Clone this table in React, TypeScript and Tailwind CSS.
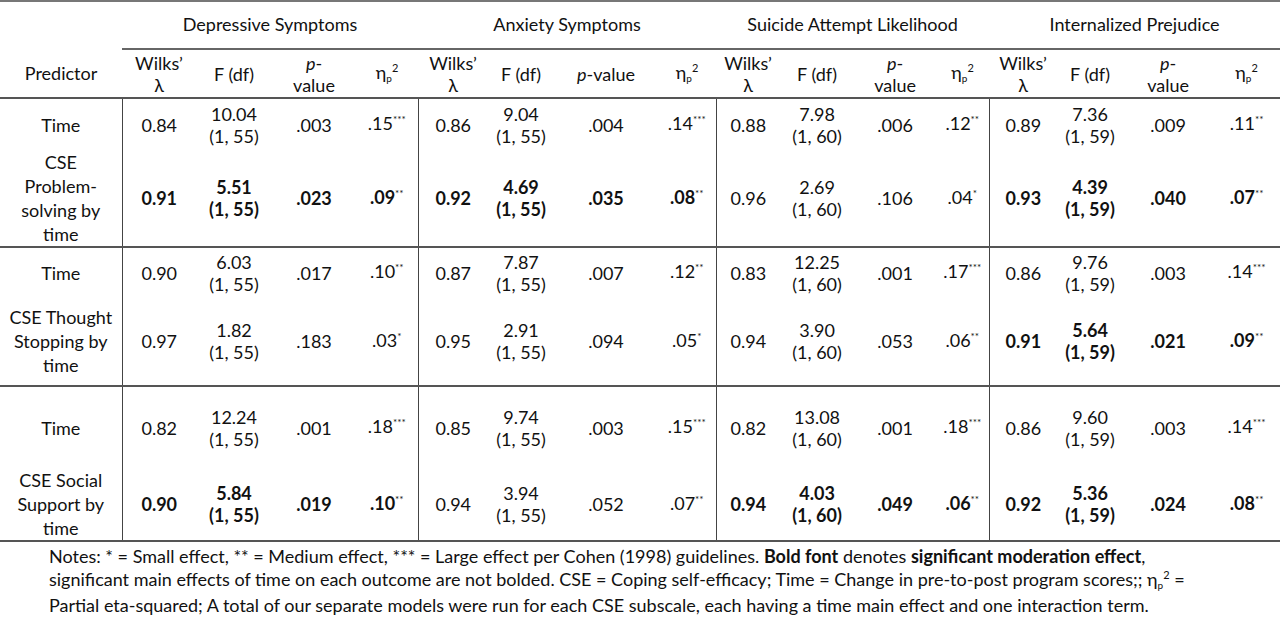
import React from 'react';

const groups = ['Depressive Symptoms', 'Anxiety Symptoms', 'Suicide Attempt Likelihood', 'Internalized Prejudice'];

// column widths per group: Wilks, F, p, eta
const colWidths = [
  [74, 76, 84, 62],
  [70, 66, 104, 58],
  [64, 74, 82, 53],
  [68, 66, 90, 67],
];

const c = (v: string, f: string, df: string, p: string, eta: string, stars: string, bold = false) => ({ v, f, df, p, eta, stars, bold });

const sections = [
  {
    rows: [
      { label: ['Time'], h: 'h-[52px]', cells: [c('0.84', '10.04', '(1, 55)', '.003', '.15', '***'), c('0.86', '9.04', '(1, 55)', '.004', '.14', '***'), c('0.88', '7.98', '(1, 60)', '.006', '.12', '**'), c('0.89', '7.36', '(1, 59)', '.009', '.11', '**')] },
      { label: ['CSE', 'Problem-', 'solving by', 'time'], h: 'h-[96px]', cells: [c('0.91', '5.51', '(1, 55)', '.023', '.09', '**', true), c('0.92', '4.69', '(1, 55)', '.035', '.08', '**', true), c('0.96', '2.69', '(1, 60)', '.106', '.04', '*'), c('0.93', '4.39', '(1, 59)', '.040', '.07', '**', true)] },
    ],
  },
  {
    rows: [
      { label: ['Time'], h: 'h-[50px]', cells: [c('0.90', '6.03', '(1, 55)', '.017', '.10', '**'), c('0.87', '7.87', '(1, 55)', '.007', '.12', '**'), c('0.83', '12.25', '(1, 60)', '.001', '.17', '***'), c('0.86', '9.76', '(1, 59)', '.003', '.14', '***')] },
      { label: ['CSE Thought', 'Stopping by', 'time'], h: 'h-[89px]', cells: [c('0.97', '1.82', '(1, 55)', '.183', '.03', '*'), c('0.95', '2.91', '(1, 55)', '.094', '.05', '*'), c('0.94', '3.90', '(1, 60)', '.053', '.06', '**'), c('0.91', '5.64', '(1, 59)', '.021', '.09', '**', true)] },
    ],
  },
  {
    rows: [
      { label: ['Time'], h: 'h-[82px]', cells: [c('0.82', '12.24', '(1, 55)', '.001', '.18', '***'), c('0.85', '9.74', '(1, 55)', '.003', '.15', '***'), c('0.82', '13.08', '(1, 60)', '.001', '.18', '***'), c('0.86', '9.60', '(1, 59)', '.003', '.14', '***')] },
      { label: ['CSE Social', 'Support by', 'time'], h: 'h-[73px]', cells: [c('0.90', '5.84', '(1, 55)', '.019', '.10', '**', true), c('0.94', '3.94', '(1, 55)', '.052', '.07', '**'), c('0.94', '4.03', '(1, 60)', '.049', '.06', '**', true), c('0.92', '5.36', '(1, 59)', '.024', '.08', '**', true)] },
    ],
  },
];

const Eta = () => (
  <span>
    η<span className="text-[10px] relative top-[3px]">p</span>
    <span className="text-[11px] relative top-[-7px]">2</span>
  </span>
);

const PValue = ({ wrap }: { wrap: boolean }) => (
  <span>
    <i>p</i>-{wrap ? <br /> : null}value
  </span>
);

export default function App() {
  return (
    <div className="w-[1280px] h-[623px] bg-white text-[#111] overflow-hidden" style={{ fontFamily: 'Lato, "Open Sans", sans-serif' }}>
      <table className="table-fixed border-collapse w-[1280px] text-[18px] leading-[22px]">
        <colgroup>
          <col className="w-[122px]" />
          {colWidths.flat().map((w, i) => (
            <col key={i} style={{ width: w }} />
          ))}
        </colgroup>
        <thead>
          <tr className="h-[48px] border-t-2 border-[#777]">
            <th className="font-normal" />
            {groups.map(g => (
              <th key={g} colSpan={4} className="font-normal text-center align-middle border-b-2 border-[#666] pb-[2px]">
                {g}
              </th>
            ))}
          </tr>
          <tr className="h-[49px] border-b-2 border-[#555]">
            <th className="font-normal text-center align-middle">Predictor</th>
            {groups.map((g, gi) => (
              <React.Fragment key={g}>
                <th className="font-normal text-center align-middle">
                  Wilks’
                  <br />λ
                </th>
                <th className="font-normal text-center align-middle">F (df)</th>
                <th className="font-normal text-center align-middle">
                  <PValue wrap={gi !== 1} />
                </th>
                <th className="font-normal text-center align-middle">
                  <Eta />
                </th>
              </React.Fragment>
            ))}
          </tr>
        </thead>
        <tbody>
          {sections.map((s, si) =>
            s.rows.map((r, ri) => (
              <tr key={`${si}-${ri}`} className={`${r.h} ${ri === 1 ? 'border-b-2 border-[#555]' : ''}`}>
                <td className="text-center align-middle border-r border-[#444] leading-[24px]">
                  {r.label.map((l, li) => (
                    <div key={li}>{l}</div>
                  ))}
                </td>
                {r.cells.map((cell, ci) => (
                  <React.Fragment key={ci}>
                    <td className={`text-center align-middle ${cell.bold ? 'font-bold' : ''}`}>{cell.v}</td>
                    <td className={`text-center align-middle ${cell.bold ? 'font-bold' : ''}`}>
                      {cell.f}
                      <br />
                      {cell.df}
                    </td>
                    <td className={`text-center align-middle ${cell.bold ? 'font-bold' : ''}`}>{cell.p}</td>
                    <td className={`text-center align-middle ${ci < 3 ? 'border-r border-[#444]' : ''} ${cell.bold ? 'font-bold' : ''}`}>
                      {cell.eta}
                      <span className="text-[10px] relative top-[-7px] font-normal">{cell.stars}</span>
                    </td>
                  </React.Fragment>
                ))}
              </tr>
            ))
          )}
        </tbody>
      </table>
      <p className="pl-[49px] pt-[3px] text-[18px] leading-[23px]">
        Notes: * = Small effect, ** = Medium effect, *** = Large effect per Cohen (1998) guidelines. <b>Bold font</b> denotes <b>significant moderation effect</b>,
        <br />
        significant main effects of time on each outcome are not bolded. CSE = Coping self-efficacy; Time = Change in pre-to-post program scores;; η
        <span className="text-[10px] relative top-[3px]">p</span>
        <span className="text-[11px] relative top-[-7px]">2</span> =
        <br />
        Partial eta-squared; A total of our separate models were run for each CSE subscale, each having a time main effect and one interaction term.
      </p>
    </div>
  );
}
